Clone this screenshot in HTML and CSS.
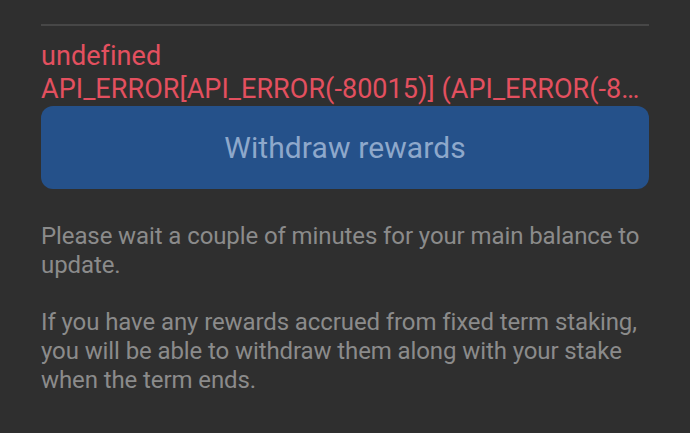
FILE: index.html
```html
<!DOCTYPE html>
<html lang="en">
<head>
  <meta charset="UTF-8">
  <meta name="viewport" content="width=device-width, initial-scale=1.0">
  <title>Withdraw rewards</title>
  <link rel="stylesheet" href="styles.css">
</head>
<body>
  <div class="panel">
    <div class="divider"></div>

    <div class="error">
      <div class="error-line">undefined</div>
      <div class="error-line">API_ERROR[API_ERROR(-80015)] (API_ERROR(-8&hellip;</div>
    </div>

    <button class="withdraw-btn" disabled>Withdraw rewards</button>

    <div class="notes">
      <p>Please wait a couple of minutes for your main balance to update.</p>
      <p>If you have any rewards accrued from fixed term staking, you will be able to withdraw them along with your stake when the term ends.</p>
    </div>
  </div>
</body>
</html>
```

FILE: styles.css
```css
* {
  box-sizing: border-box;
  margin: 0;
  padding: 0;
  font-family: Roboto, 'Noto Sans', sans-serif;
}

body {
  background-color: #2f2f2f;
  width: 690px;
  height: 433px;
  overflow: hidden;
}

.panel {
  padding: 24px 41px 0;
}

.divider {
  height: 2px;
  background-color: #474747;
}

.error {
  margin-top: 14px;
  color: #e3505f;
  font-size: 27px;
  line-height: 33px;
  letter-spacing: 0.05px;
}

.error-line {
  white-space: nowrap;
}

.withdraw-btn {
  display: block;
  width: 100%;
  height: 83px;
  border: none;
  border-radius: 12px;
  background-color: #25518a;
  color: #8ea8cb;
  font-size: 30px;
  letter-spacing: 0.1px;
}

.notes {
  margin-top: 33px;
  color: #8b8b8b;
  font-size: 24px;
  line-height: 29px;
  letter-spacing: -0.1px;
}

.notes p {
  margin-bottom: 28px;
}
```
